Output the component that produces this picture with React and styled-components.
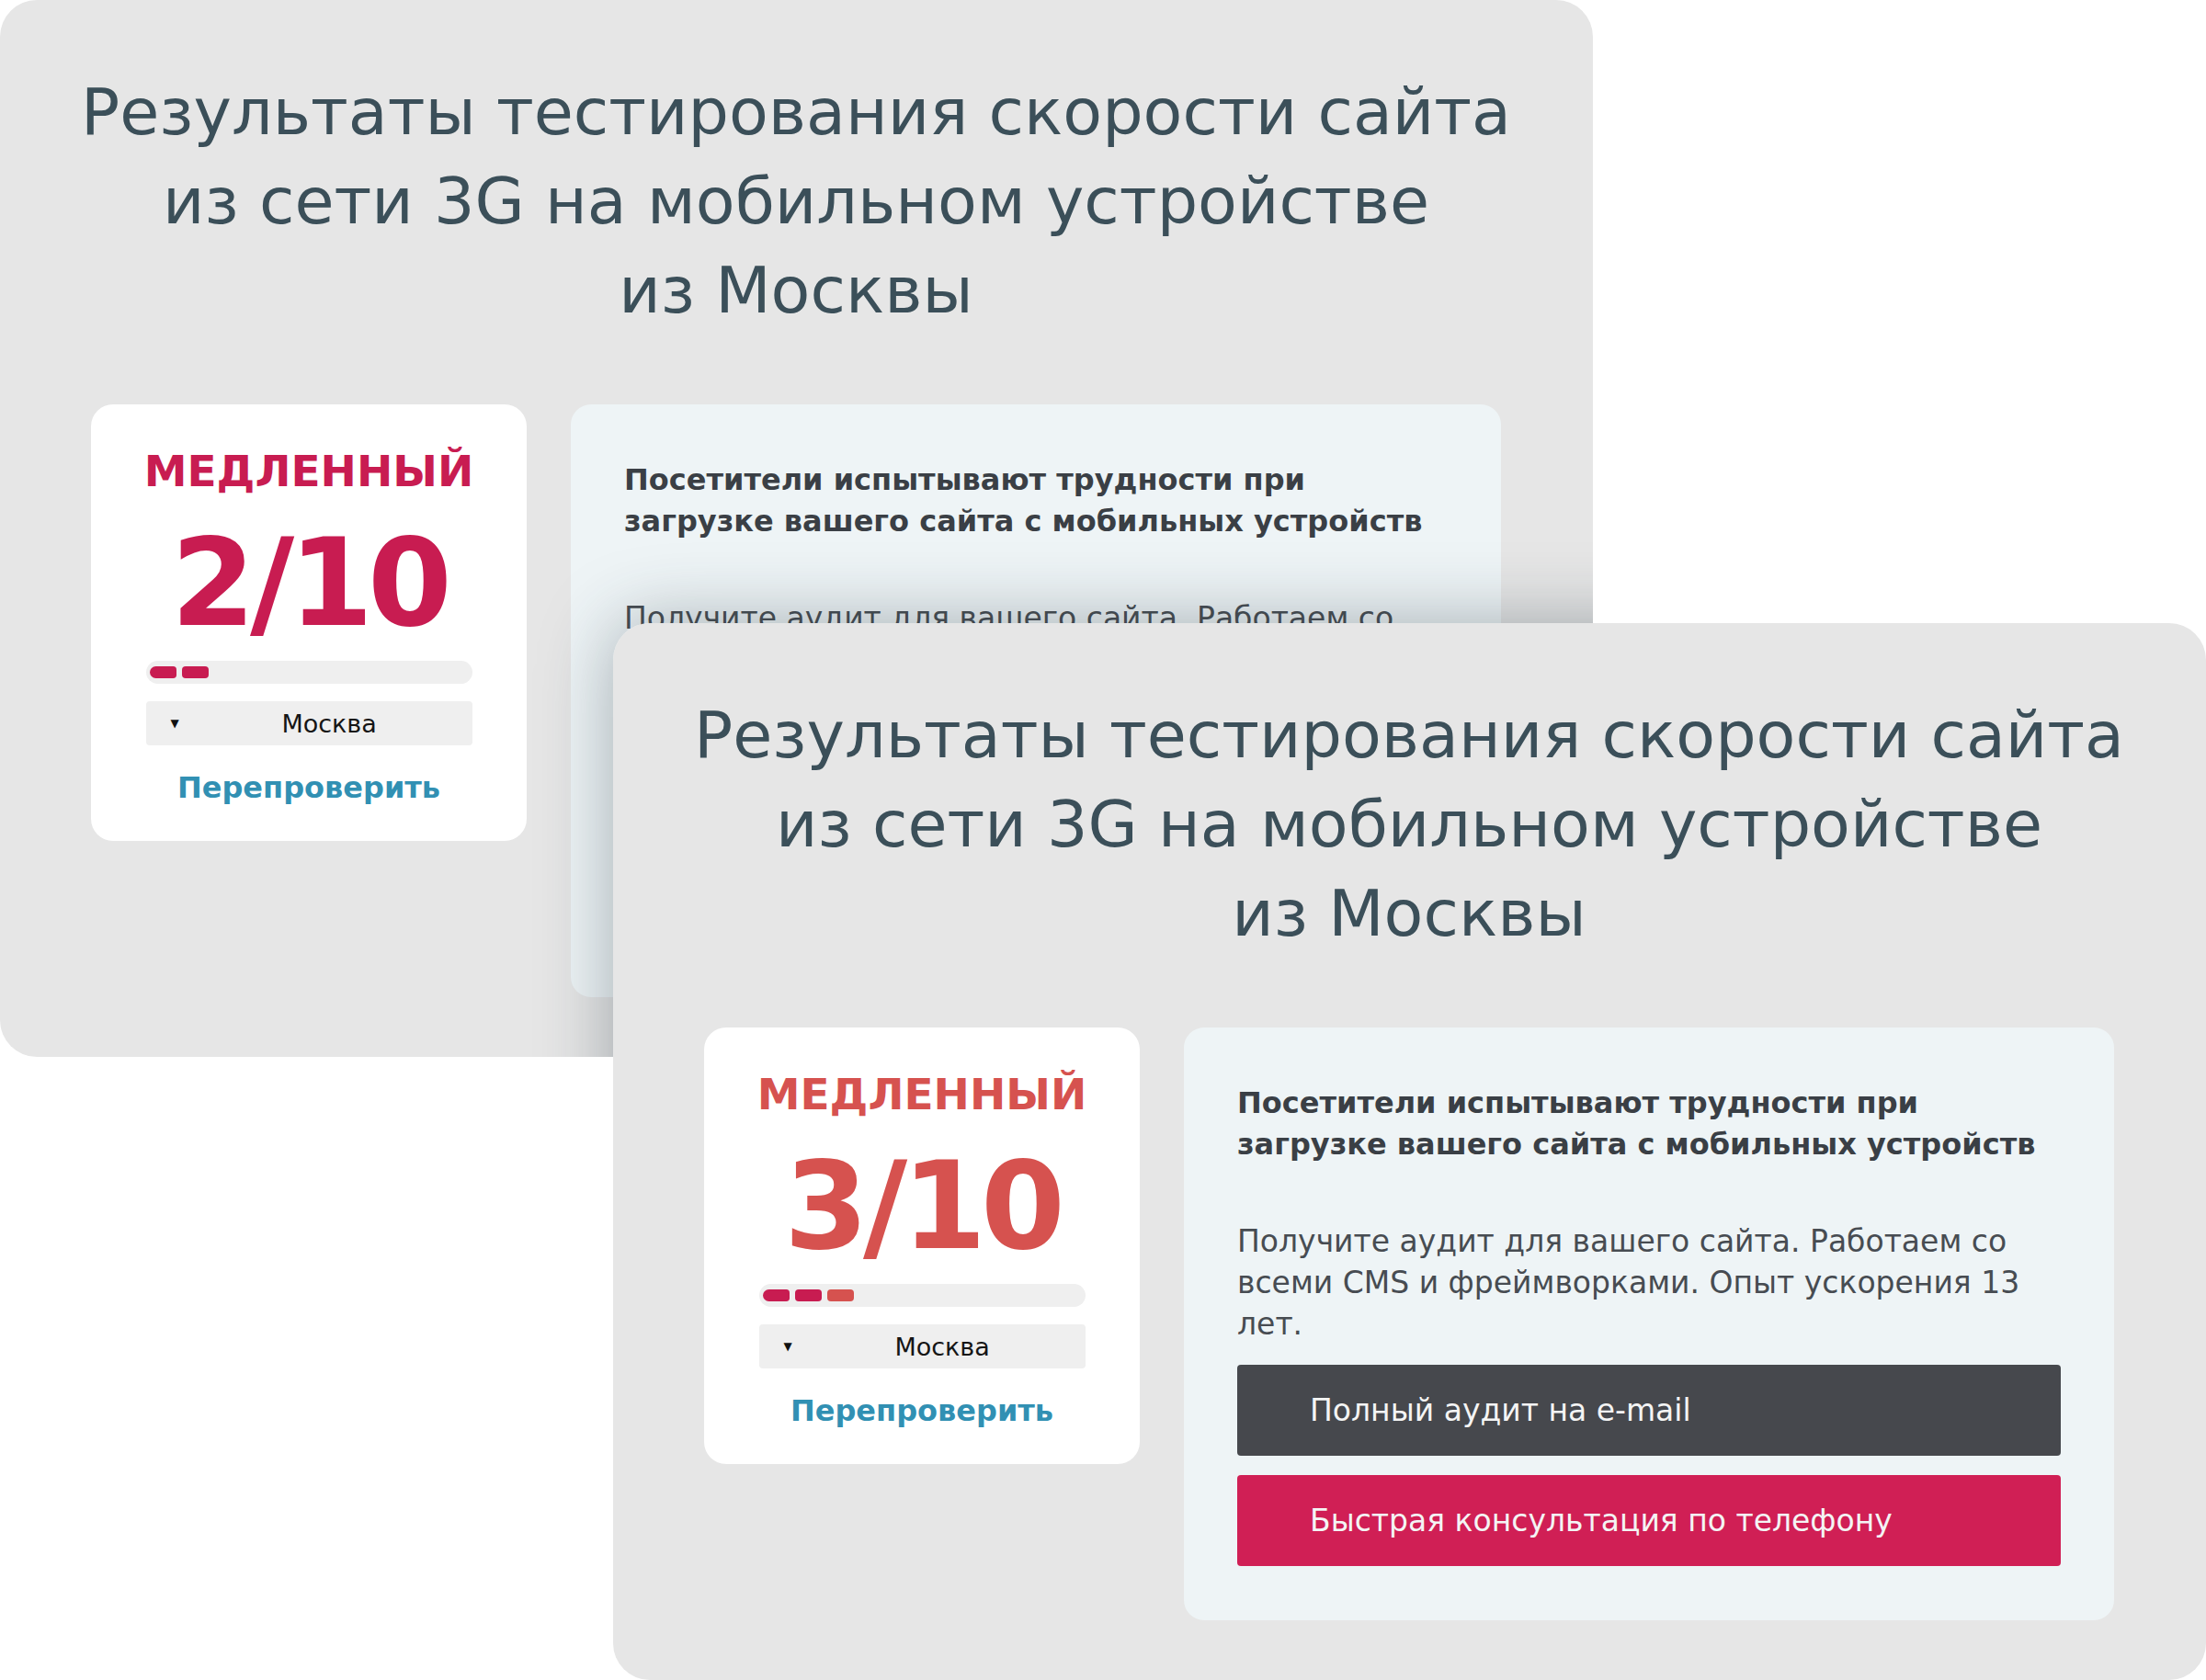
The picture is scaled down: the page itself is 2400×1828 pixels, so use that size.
import React from 'react';
import styled, { createGlobalStyle } from 'styled-components';

const GlobalStyle = createGlobalStyle`
  html, body {
    margin: 0;
    padding: 0;
    background: #ffffff;
  }

  body {
    font-family: "DejaVu Sans", "Noto Sans", sans-serif;
  }
`;

const CRIMSON = '#c81c51';
const CORAL = '#d6524f';

const Stage = styled.div`
  position: relative;
  width: 2400px;
  height: 1828px;
  overflow: hidden;
  background: #ffffff;
`;

// each report sits like a window on the canvas, the newest one on top
const Card = styled.section`
  position: absolute;
  left: ${p => p.$x}px;
  top: ${p => p.$y}px;
  width: 1733px;
  height: 1150px;
  box-sizing: border-box;
  padding: 74px 100px 0 99px;
  background: #e6e6e6;
  border-radius: 40px;
  overflow: hidden;
`;

// shadow of the upper card, kept inside the lower one
const CastShadow = styled.div`
  position: absolute;
  left: 667px;
  top: 678px;
  width: 1733px;
  height: 1150px;
  border-radius: 40px;
  box-shadow: 0 0 80px 0 rgba(40, 55, 65, 0.38);
  pointer-events: none;
`;

const Title = styled.h2`
  margin: 0 -60px;
  font-size: 70px;
  font-weight: 400;
  line-height: 97px;
  color: #3b4f59;
  text-align: center;
  white-space: nowrap;
`;

const Content = styled.div`
  display: flex;
  align-items: flex-start;
  gap: 48px;
  margin-top: 75px;
`;

const ScoreBox = styled.div`
  width: 474px;
  height: 475px;
  box-sizing: border-box;
  padding: 44px 59px 0;
  background: #ffffff;
  border-radius: 24px;
  display: flex;
  flex-direction: column;
  align-items: center;
  flex-shrink: 0;
`;

const Verdict = styled.div`
  font-size: 47px;
  font-weight: 700;
  line-height: 58px;
  color: ${p => p.$color};
  white-space: nowrap;
`;

const Score = styled.div`
  margin-top: 26px;
  font-size: 132px;
  font-weight: 700;
  line-height: 132px;
  letter-spacing: -6px;
  color: ${p => p.$color};
  white-space: nowrap;
`;

const Meter = styled.div`
  margin-top: 19px;
  width: 355px;
  height: 25px;
  box-sizing: border-box;
  padding: 6px 4px;
  border-radius: 13px;
  background: #efefef;
  display: grid;
  grid-template-columns: repeat(10, 1fr);
  gap: 6px;
`;

const Tick = styled.span`
  height: 13px;
  border-radius: 4px;
  background: ${p => p.$color};

  &:first-child {
    border-radius: 7px 4px 4px 7px;
  }
`;

const Select = styled.div`
  margin-top: 19px;
  width: 355px;
  height: 48px;
  box-sizing: border-box;
  padding-left: 27px;
  border-radius: 4px;
  background: #efefef;
  display: flex;
  align-items: center;
`;

const Caret = styled.span`
  font-size: 12px;
  color: #111111;
`;

const SelectLabel = styled.span`
  flex: 1;
  padding-left: 8px;
  text-align: center;
  font-size: 27px;
  color: #151515;
`;

const Recheck = styled.a`
  margin-top: 26px;
  font-size: 32px;
  font-weight: 700;
  line-height: 40px;
  color: #3190b3;
  text-decoration: none;
`;

const Offer = styled.div`
  width: 1012px;
  height: 645px;
  box-sizing: border-box;
  padding: 60px 58px 58px;
  background: #eef4f6;
  border-radius: 22px;
  flex-shrink: 0;
`;

const OfferHeading = styled.h3`
  margin: 0;
  font-size: 32px;
  font-weight: 700;
  line-height: 45px;
  color: #3a3f45;
`;

const OfferText = styled.p`
  margin: 60px 0 0;
  font-size: 33px;
  font-weight: 400;
  line-height: 45px;
  color: #474c52;
`;

const Actions = styled.div`
  margin-top: 22px;
  display: flex;
  flex-direction: column;
  gap: 21px;
`;

const ActionButton = styled.button`
  height: 99px;
  padding: 0 0 0 79px;
  border: none;
  border-radius: 4px;
  background: ${p => (p.$accent ? '#d01f55' : '#46484d')};
  color: #f4f4f4;
  font-family: inherit;
  font-size: 33px;
  text-align: left;
  display: flex;
  align-items: center;
  cursor: pointer;
`;

const reports = [
  { id: 'earlier', x: 0, y: 0, score: 2, tone: CRIMSON, ticks: [CRIMSON, CRIMSON] },
  { id: 'latest', x: 667, y: 678, score: 3, tone: CORAL, ticks: [CRIMSON, CRIMSON, CORAL] },
];

const Report = ({ report, children }) => (
  <Card $x={report.x} $y={report.y}>
    <Title>
      Результаты тестирования скорости сайта
      <br />
      из сети 3G на мобильном устройстве
      <br />
      из Москвы
    </Title>

    <Content>
      <ScoreBox>
        <Verdict $color={report.tone}>МЕДЛЕННЫЙ</Verdict>
        <Score $color={report.tone}>{report.score}/10</Score>
        <Meter>
          {report.ticks.map((color, i) => (
            <Tick key={i} $color={color} />
          ))}
        </Meter>
        <Select>
          <Caret>▼</Caret>
          <SelectLabel>Москва</SelectLabel>
        </Select>
        <Recheck href="#">Перепроверить</Recheck>
      </ScoreBox>

      <Offer>
        <OfferHeading>
          Посетители испытывают трудности при
          <br />
          загрузке вашего сайта с мобильных устройств
        </OfferHeading>
        <OfferText>
          Получите аудит для вашего сайта. Работаем со
          <br />
          всеми CMS и фреймворками. Опыт ускорения 13
          <br />
          лет.
        </OfferText>
        <Actions>
          <ActionButton>Полный аудит на e-mail</ActionButton>
          <ActionButton $accent>Быстрая консультация по телефону</ActionButton>
        </Actions>
      </Offer>
    </Content>

    {children}
  </Card>
);

export default function App() {
  const [earlier, latest] = reports;

  return (
    <Stage>
      <GlobalStyle />
      <Report report={earlier}>
        <CastShadow />
      </Report>
      <Report report={latest} />
    </Stage>
  );
}
